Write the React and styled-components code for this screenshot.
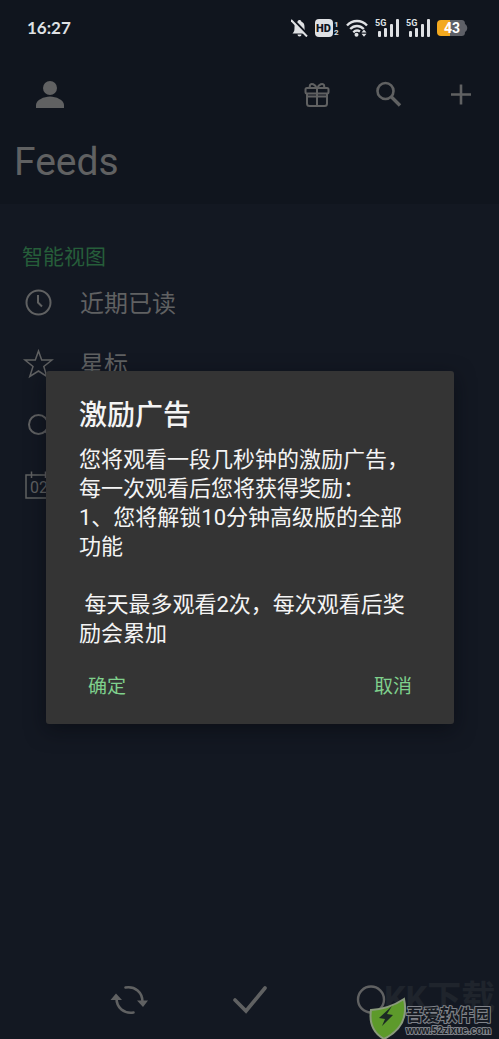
import React from "react";
import styled, { createGlobalStyle } from "styled-components";

const GlobalStyle = createGlobalStyle`
  * {
    box-sizing: border-box;
  }
  body {
    margin: 0;
    background: #131822;
    font-family: Roboto, "Noto Sans CJK SC", sans-serif;
  }
  button {
    display: flex;
    padding: 0;
    border: 0;
    background: none;
    font: inherit;
    color: inherit;
    cursor: pointer;
  }
  svg {
    display: block;
    flex: none;
  }
`;

const Page = styled.div`
  position: relative;
  display: flex;
  flex-direction: column;
  min-height: 100vh;
  overflow: hidden;
  color: #606162;
  background: #131822;
`;

const Header = styled.header`
  height: 204px;
  background: #10151e;
`;

const StatusBar = styled.div`
  display: flex;
  align-items: center;
  justify-content: space-between;
  height: 56px;
  padding: 0 31px 0 27px;
  color: #dfe1e4;
`;

const Time = styled.time`
  font: 700 17px/20px Lato, sans-serif;
`;

const StatusIcons = styled.div`
  display: flex;
  align-items: center;
  gap: 7px;
`;

const Toolbar = styled.div`
  display: flex;
  align-items: center;
  height: 76px;
  padding: 0 20px 0 32px;
`;

const Actions = styled.div`
  display: flex;
  gap: 36px;
  margin-left: auto;
`;

const Title = styled.h1`
  margin: 9px 0 0 14px;
  font-size: 39px;
  line-height: 42px;
  font-weight: 400;
`;

const Main = styled.main`
  flex: 1;
  padding: 39px 22px 0;
`;

const SectionTitle = styled.h2`
  margin: 0;
  color: #265e3a;
  font-size: 21px;
  line-height: 28px;
  font-weight: 400;
`;

const List = styled.ul`
  margin: 0;
  padding: 0;
  list-style: none;
`;

const Item = styled.li`
  display: flex;
  align-items: center;
  gap: 26px;
  height: 61px;
  font-size: 24px;
`;

const BottomBar = styled.nav`
  display: flex;
  align-items: center;
  justify-content: space-around;
  height: 80px;
  padding: 0 67px;
`;

const Overlay = styled.div`
  position: absolute;
  inset: 0;
  display: flex;
  align-items: center;
  justify-content: center;
  padding: 56px 45px 0 46px;
`;

const Dialog = styled.section`
  width: 100%;
  padding: 26px 33px 22px;
  border-radius: 3px;
  color: #f4f4f4;
  background: #343434;
  box-shadow: 0 6px 20px rgba(5, 7, 14, 0.5);
`;

const DialogTitle = styled.h2`
  margin: 0 0 10px;
  font-size: 28px;
  line-height: 38px;
  font-weight: 500;
`;

const Message = styled.p`
  margin: 0;
  font-size: 22px;
  line-height: 29px;
  white-space: pre-wrap;
`;

const DialogActions = styled.div`
  display: flex;
  justify-content: space-between;
  margin-top: 24px;
  padding: 0 9px;
`;

const TextButton = styled.button`
  && {
    color: #7fd08c;
    font-size: 19px;
    line-height: 30px;
  }
`;

const Watermark = styled.div`
  position: absolute;
  right: 0;
  bottom: 0;
`;

function Icon({ w = 28, h = w, box = `0 0 ${w} ${h}`, fill = "none", stroke = "currentColor", width = 2, children }) {
  return (
    <svg width={w} height={h} viewBox={box} fill={fill} stroke={stroke} strokeWidth={width} aria-hidden="true">
      {children}
    </svg>
  );
}

function Signal() {
  return (
    <Icon w={24} h={18} fill="currentColor" stroke="none">
      <text x="0" y="7" fontFamily="Roboto" fontSize="9" fontWeight="700">5G</text>
      <rect x="3" y="12" width="3" height="6" rx="1" />
      <rect x="9" y="9" width="3" height="9" rx="1" />
      <rect x="15" y="5" width="3" height="13" rx="1" />
      <rect x="21" y="0" width="3" height="18" rx="1" />
    </Icon>
  );
}

function StatusRow() {
  return (
    <StatusIcons>
      <Icon w={17} h={18} fill="currentColor" stroke="none">
        <path d="M1.500 14.500h14c-2-2-2-3.500-2-6.500 0-3-1-4.500-3-5.200C10 .5 7 .5 6.500 2.800c-2 .7-3 2.200-3 5.200 0 3 0 4.500-2 6.500zM6.500 15.500h4a2 2 0 0 1-4 0z" />
        <path d="M1.500 0l16 16.500" stroke="#10151e" strokeWidth="2.400" />
        <path d="M0 1l16 16.500" stroke="currentColor" strokeWidth="2" />
      </Icon>
      <Icon w={24} h={18} fill="currentColor" stroke="none">
        <rect x="0" y="0" width="18" height="18" rx="4" />
        <text x="1" y="13" fill="#10151e" fontFamily="Roboto" fontSize="11" fontWeight="900">HD</text>
        <text x="19" y="8" fontFamily="Roboto" fontSize="8" fontWeight="700">1</text>
        <text x="19" y="16" fontFamily="Roboto" fontSize="8" fontWeight="700">2</text>
      </Icon>
      <Icon w={22} h={18} width={2.4}>
        <path d="M1 6.500c5.500-6 14.500-6 20 0M4.200 10c4-4 9.600-4 13.600 0M7.300 13.300c2-2 4.500-2.300 6.700-.8" />
        <circle cx="10.500" cy="15.800" r="2" fill="currentColor" stroke="none" />
        <path d="M15.500 13.500L18 10.500l2.500 3zM15.500 14.800l2.500 3 2.500-3z" fill="currentColor" stroke="none" />
      </Icon>
      <Signal />
      <Signal />
      <Icon w={31} h={18} stroke="none">
        <path d="M4 1h9v16H4a4 4 0 0 1-4-4V5a4 4 0 0 1 4-4z" fill="#f3a91f" />
        <path d="M13 1h11c3 0 4 1 4 4 3 2 3 6 0 8 0 3-1 4-4 4H13z" fill="#5e6067" />
        <text x="7" y="14" fill="#fff" fontFamily="Roboto" fontSize="14" fontWeight="700">43</text>
      </Icon>
    </StatusIcons>
  );
}

export default function App() {
  return (
    <Page>
      <GlobalStyle />
      <Header>
        <StatusBar>
          <Time>16:27</Time>
          <StatusRow />
        </StatusBar>
        <Toolbar>
          <button aria-label="Account">
            <Icon w={36} fill="currentColor" stroke="none">
              <circle cx="18" cy="12" r="7" />
              <path d="M4 32v-3c0-5 8-8.500 14-8.500S32 24 32 29v3z" />
            </Icon>
          </button>
          <Actions>
            <button aria-label="Rewards">
              <Icon w={36}>
                <rect x="6.500" y="12" width="23" height="5.500" rx="1.500" />
                <path d="M8 17.500v10q0 2.500 2.500 2.500h15q2.500 0 2.500-2.500v-10M18 12v18M8 20.500h20" />
                <path d="M17.500 12c-1-4-5.500-5-6.500-3-.5 1-.2 2.300.5 3M18.500 12c1-4 5.500-5 6.500-3 .5 1 .2 2.300-.5 3" />
              </Icon>
            </button>
            <button aria-label="Search">
              <Icon w={36} width={2.600}>
                <circle cx="14.500" cy="15" r="8" />
                <path d="M20 20.500l9 9" strokeWidth="3.400" />
              </Icon>
            </button>
            <button aria-label="Add">
              <Icon w={36} width={2.600}>
                <path d="M18 8.500v20M8 18.500h20" />
              </Icon>
            </button>
          </Actions>
        </Toolbar>
        <Title>Feeds</Title>
      </Header>
      <Main>
        <SectionTitle>智能视图</SectionTitle>
        <List>
          <Item>
            <Icon w={32}>
              <circle cx="16.500" cy="16.500" r="12" />
              <path d="M16 9v7.500l4 4" />
            </Icon>
            近期已读
          </Item>
          <Item>
            <Icon w={32} width={1.500}>
              <path d="M16.500 4l3.200 9H30l-8.200 6.500 3 10-8.300-5.500-8.700 5.500 3.200-10L3 13h10.300z" />
            </Icon>
            星标
          </Item>
          <Item>
            <Icon w={32}>
              <circle cx="16.500" cy="16.500" r="9.500" />
              <path d="M23.500 23.500l6 6" />
            </Icon>
          </Item>
          <Item>
            <Icon w={32} width={1.500}>
              <path d="M4 6h26v23H4zM9.500 2.500v6.500M23.500 2.500v6.500" />
              <text x="8" y="24" fill="currentColor" stroke="none" fontFamily="Roboto" fontSize="16">02</text>
            </Icon>
          </Item>
        </List>
      </Main>
      <BottomBar>
        <button aria-label="Refresh">
          <Icon w={40} width={2.600}>
            <path d="M17.500 8.500C27 7 34.500 13 34.500 23M25.500 33.500C16 35 8.500 29 8.500 19" strokeLinecap="round" />
            <path d="M29 21.500h11L35 28zM2.500 21L8 14.500l6 6.500z" fill="currentColor" stroke="none" />
          </Icon>
        </button>
        <button aria-label="Mark all read">
          <Icon w={40} width={3.600}>
            <path d="M6 21l11 11L36 9" strokeLinecap="round" />
          </Icon>
        </button>
        <button aria-label="Unread">
          <Icon w={40} width={2.400}>
            <circle cx="20" cy="20.500" r="13" />
          </Icon>
        </button>
      </BottomBar>
      <Overlay>
        <Dialog role="dialog" aria-modal="true" aria-labelledby="ad-title">
          <DialogTitle id="ad-title">激励广告</DialogTitle>
          <Message>
            {"您将观看一段几秒钟的激励广告，\n每一次观看后您将获得奖励：\n1、您将解锁10分钟高级版的全部功能\n\n 每天最多观看2次，每次观看后奖励会累加"}
          </Message>
          <DialogActions>
            <TextButton>确定</TextButton>
            <TextButton>取消</TextButton>
          </DialogActions>
        </Dialog>
      </Overlay>
      <Watermark>
        <Icon w={134} h={59} stroke="none">
          <text x="19" y="30" fill="#1f242c" fontFamily="Roboto, Noto Sans CJK SC" fontSize="34" fontWeight="700">KK下载</text>
          <path d="M6 30q18-1 33-11 6 27-20 40Q3 50 6 30z" fill="#5d9a2b" stroke="#8a9a7c" />
          <path d="M27 26L14 38l6 1-3 7 11-11-6-1z" fill="#1b2a24" />
          <g fill="#171b23" stroke="#80838a" strokeWidth="2" paintOrder="stroke" strokeLinejoin="round">
            <text x="41" y="41" fontFamily="Noto Sans CJK SC" fontSize="17" fontWeight="700">吾爱软件园</text>
            <text x="41" y="54" fontFamily="Liberation Sans" fontSize="10" fontWeight="700">www.52zixue.com</text>
          </g>
        </Icon>
      </Watermark>
    </Page>
  );
}
